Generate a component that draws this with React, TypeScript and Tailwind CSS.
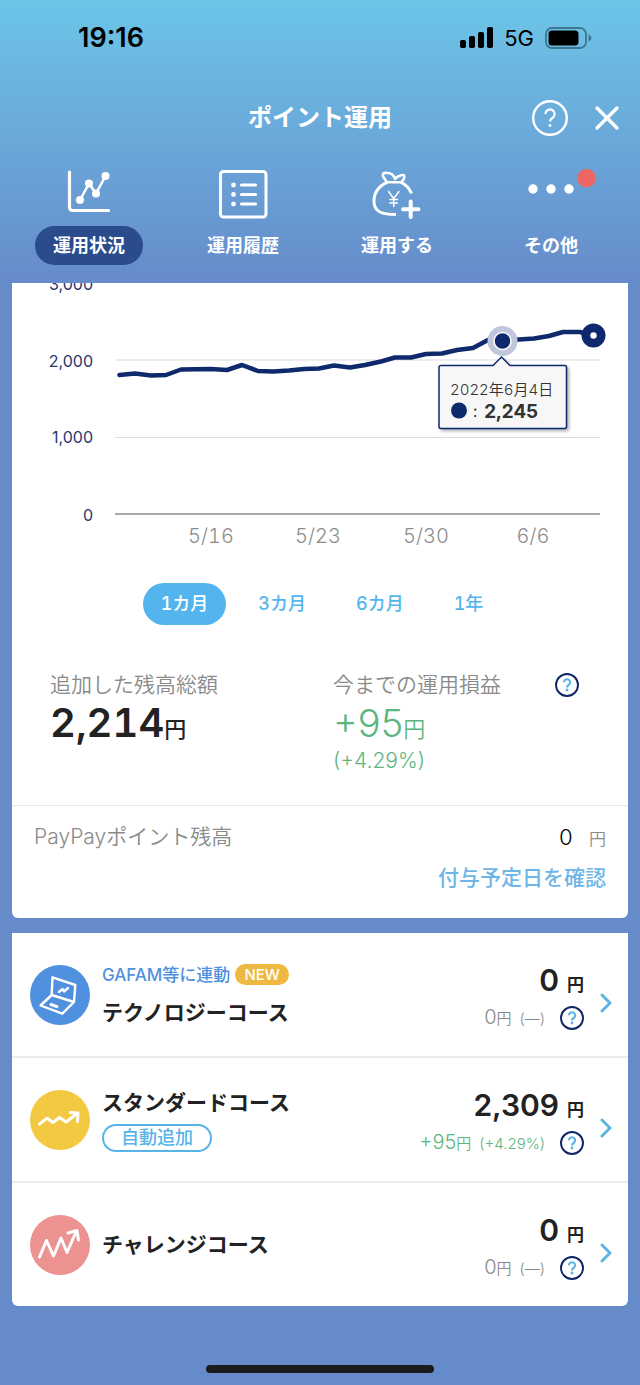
import type { ReactNode } from "react";

const HISTORY =
  "119.5,375 135,373.5 151,375.5 166,375 181,369.5 211,369 227,370 242,365 258,371 273,371.5 289,370.5 304,369 319,368.5 334,365.5 350,367.5 365,365 381,361.5 395,357.5 411,357.5 426,354 442,353.5 457,350 473,348 488,340 503,341 519,339.5 534,338.5 549,336 563,332 580,332 594,336";

function StatusBar() {
  return (
    <div className="flex h-[76px] items-center justify-between pl-[78px] pr-12 text-black">
      <span className="text-[27px] font-semibold leading-8">19:16</span>
      <div className="flex items-center gap-[11px]">
        <svg width="33" height="22" viewBox="0 0 33 22" fill="currentColor" aria-hidden="true">
          <rect x="0" y="13" width="6" height="8" rx="1.8" />
          <rect x="9" y="9" width="6" height="12" rx="1.8" />
          <rect x="18" y="5" width="6" height="16" rx="1.8" />
          <rect x="27" y="0" width="6" height="21" rx="1.8" />
        </svg>
        <span className="text-[22px] leading-8">5G</span>
        <svg width="47" height="22" viewBox="0 0 47 22" aria-hidden="true">
          <rect x="1" y="1" width="40" height="20" rx="6" fill="none" stroke="#3d7790" strokeWidth="1.8" />
          <rect x="3.5" y="3.5" width="30" height="15" rx="3.5" fill="#000" />
          <path d="M43.5 7.5c2 .8 3 2 3 3.5s-1 2.700-3 3.500z" fill="#3d7790" />
        </svg>
      </div>
    </div>
  );
}

function QuestionMark({ color, weight }: { color: string; weight: number }) {
  return (
    <>
      <path
        d="M8.900 9.300a3.100 3.100 0 1 1 4.700 2.700c-1.100.7-1.600 1.200-1.600 2.400"
        fill="none"
        stroke={color}
        strokeWidth={weight}
      />
      <circle cx="12" cy="17" r={weight * 0.68} fill={color} />
    </>
  );
}

function HelpButton() {
  return (
    <button type="button" aria-label="ヘルプ" className="block size-6 shrink-0">
      <svg viewBox="0 0 24 24" className="size-6">
        <circle cx="12" cy="12" r="11" fill="none" stroke="#0d2466" strokeWidth="1.900" />
        <QuestionMark color="#58b4ea" weight={2.1} />
      </svg>
    </button>
  );
}

function TitleBar() {
  return (
    <div className="grid h-[84px] grid-cols-[1fr_auto_1fr] items-center px-5 text-white">
      <span />
      <h1 className="text-2xl font-bold leading-8">ポイント運用</h1>
      <div className="flex items-center justify-end gap-[26px]">
        <button type="button" aria-label="ヘルプ">
          <svg viewBox="0 0 24 24" className="block size-9">
            <circle cx="12" cy="12" r="11.200" fill="none" stroke="#fff" strokeWidth="1.600" />
            <QuestionMark color="#fff" weight={1.4} />
          </svg>
        </button>
        <button type="button" aria-label="閉じる">
          <svg viewBox="0 0 26 26" className="block size-[26px]">
            <path d="M3 3l20 20M23 3L3 23" stroke="#fff" strokeWidth="3.400" strokeLinecap="round" />
          </svg>
        </button>
      </div>
    </div>
  );
}

function Tab({ label, active, children }: { label: string; active?: boolean; children: ReactNode }) {
  return (
    <button type="button" aria-pressed={!!active} className="flex flex-col items-center gap-2 text-white">
      <svg
        viewBox="0 0 52 52"
        className="size-[52px] overflow-visible"
        fill="none"
        stroke="#fff"
        strokeLinecap="round"
        strokeLinejoin="round"
        aria-hidden="true"
      >
        {children}
      </svg>
      <span
        className={
          active
            ? "rounded-full bg-[#2b4c8c] px-[18px] text-lg font-bold leading-[39px]"
            : "px-[18px] text-lg font-bold leading-[39px]"
        }
      >
        {label}
      </span>
    </button>
  );
}

function Tabs() {
  return (
    <nav className="grid grid-cols-4 px-3 pb-[18px] pt-[6px]">
      <Tab label="運用状況" active>
        <path d="M6.500 6V41Q6.500 44.500 10 44.500H45.500" strokeWidth="3.200" />
        <path d="M17 34L26 17.500L33 27.500L42.500 10" strokeWidth="2.600" />
        <g fill="#fff" stroke="none">
          <circle cx="17" cy="34" r="4" />
          <circle cx="26" cy="17.500" r="4" />
          <circle cx="33" cy="27.500" r="4" />
          <circle cx="42.500" cy="10" r="4" />
        </g>
      </Tab>
      <Tab label="運用履歴">
        <rect x="3.500" y="5.500" width="45.500" height="45.500" rx="3" strokeWidth="3" />
        <path d="M24.500 19H38.500M24.500 28.500H38.500M24.500 38H38.500" strokeWidth="3.200" />
        <g fill="#fff" stroke="none">
          <circle cx="16.500" cy="19" r="2.400" />
          <circle cx="16.500" cy="28.500" r="2.400" />
          <circle cx="16.500" cy="38" r="2.400" />
        </g>
      </Tab>
      <Tab label="運用する">
        <path
          d="M16 16.300C6 21 2.800 29 3 36C3.500 46 11 48.500 25 48.500"
          strokeWidth="3"
          strokeLinecap="butt"
        />
        <path d="M30 16.300C35 18.500 38.500 22.500 40.500 27.500" strokeWidth="3" strokeLinecap="butt" />
        <path
          d="M16 16.300H30C32 15 34 11.500 33.300 9.700C32 8.300 27 9.500 24 13C23 9 19 6.800 14.500 6.800C11 7 11.500 10 13 12C14.300 13.500 15 14.500 16 16.300"
          strokeWidth="2.600"
        />
        <path d="M17.500 25.500L22.700 32.500L28 25.500M22.700 32.500V40.500M18.800 33.500H26.500M18.800 37H26.500" strokeWidth="1.500" />
        <path d="M39.700 35.500V51M32 43.300H47.500" strokeWidth="4" />
      </Tab>
      <Tab label="その他">
        <g fill="#fff" stroke="none">
          <circle cx="8" cy="23" r="4.700" />
          <circle cx="26" cy="23" r="4.700" />
          <circle cx="44" cy="23" r="4.700" />
          <circle cx="61.500" cy="12" r="9.300" fill="#ec6764" />
        </g>
      </Tab>
    </nav>
  );
}

function Chart() {
  return (
    <svg viewBox="12 283 616 277" className="block w-full" role="img" aria-label="運用状況グラフ">
      <defs>
        <filter id="tooltip-shadow" x="-10%" y="-10%" width="125%" height="130%">
          <feDropShadow dx="2" dy="2" stdDeviation="1.500" floodColor="#000" floodOpacity="0.300" />
        </filter>
      </defs>
      <path d="M115 360H600M115 437.500H600" stroke="#dcdcdc" strokeWidth="1.200" />
      <path d="M115 514H600" stroke="#8c8c8c" strokeWidth="1.500" />
      <g className="proportional-nums" fill="#26376f" fontSize="16" textAnchor="end">
        <text x="93" y="290">3,000</text>
        <text x="93" y="367">2,000</text>
        <text x="93" y="443">1,000</text>
        <text x="93" y="521">0</text>
      </g>
      <g fill="#8c8c8c" fontSize="20" fontWeight="350" textAnchor="middle">
        <text x="211" y="543">5/16</text>
        <text x="318" y="543">5/23</text>
        <text x="426" y="543">5/30</text>
        <text x="533" y="543">6/6</text>
      </g>
      <polyline
        points={HISTORY}
        fill="none"
        stroke="#0e2a6c"
        strokeWidth="4.500"
        strokeLinecap="round"
        strokeLinejoin="round"
      />
      <circle cx="502.500" cy="341" r="15" fill="#c0c7dc" />
      <circle cx="502.500" cy="341" r="8.500" fill="#0e2a6c" stroke="#fff" strokeWidth="1.500" />
      <circle cx="593.500" cy="335.500" r="12" fill="#0e2a6c" />
      <circle cx="593.500" cy="335.500" r="3.200" fill="#fff" />
      <path
        d="M441 365.500H493L501.500 357L510 365.500H564.500Q566.500 365.500 566.500 367.500V426.500Q566.500 428.500 564.500 428.500H441Q439 428.500 439 426.500V367.500Q439 365.500 441 365.500Z"
        fill="#f7f7f7"
        stroke="#0e2a6c"
        strokeWidth="1.500"
        filter="url(#tooltip-shadow)"
      />
      <text x="450" y="395" fill="#333" fontSize="15" fontWeight="350">
        2022年6月4日
      </text>
      <circle cx="459" cy="410.500" r="8" fill="#0e2a6c" />
      <text x="473" y="417" fill="#333" fontSize="16">
        :
      </text>
      <text x="484" y="418" fill="#333" fontSize="19" fontWeight="700">
        2,245
      </text>
    </svg>
  );
}

function RangeButtons() {
  return (
    <div className="flex justify-center gap-[14px] pl-1 pt-[23px]">
      {["1カ月", "3カ月", "6カ月", "1年"].map((label, i) => (
        <button
          key={label}
          type="button"
          aria-pressed={i === 0}
          className={
            i === 0
              ? "rounded-full bg-[#54b5ee] px-[18px] text-lg font-medium leading-[42px] text-white"
              : "rounded-full px-[18px] text-lg font-medium leading-[42px] text-[#54b5ee]"
          }
        >
          {label}
        </button>
      ))}
    </div>
  );
}

function Summary() {
  return (
    <div className="grid grid-cols-2 pb-[29px] pl-[38px] pr-3 pt-[45px]">
      <div>
        <p className="text-[21px] font-[350] leading-[30px] text-[#8a8a8a]">追加した残高総額</p>
        <p className="flex h-[46px] items-baseline text-[40px] font-semibold leading-[46px] text-[#222]">
          2,214<span className="text-[22px] font-medium">円</span>
        </p>
      </div>
      <div className="pr-[37px] proportional-nums">
        <div className="flex items-center justify-between">
          <p className="text-[21px] font-[350] leading-[30px] text-[#8a8a8a]">今までの運用損益</p>
          <HelpButton />
        </div>
        <p className="flex h-[46px] items-baseline text-[38px] font-[350] leading-[46px] text-[#5cb57e]">
          +95<span className="text-[22px]">円</span>
        </p>
        <p className="text-[21px] font-[350] leading-[30px] text-[#5cb57e]">(+4.29%)</p>
      </div>
    </div>
  );
}

function PointBalance() {
  return (
    <div className="border-t border-[#e6e6e6] px-[22px] pb-[25px] pt-4">
      <div className="flex h-[30px] items-center justify-between text-[21px] font-[350] leading-[30px] text-[#8a8a8a]">
        <span>PayPayポイント残高</span>
        <span className="flex h-[30px] items-baseline gap-4">
          <span className="text-[22px] text-black">0</span>
          <span className="text-[17px]">円</span>
        </span>
      </div>
      <a href="#schedule" className="mt-[11px] block text-right text-[21px] font-medium leading-[30px] text-[#6fb6e8]">
        付与予定日を確認
      </a>
    </div>
  );
}

interface CourseProps {
  name: string;
  icon: ReactNode;
  above?: ReactNode;
  below?: ReactNode;
  amount: string;
  profit: string;
  rate: string;
  gain?: boolean;
}

function Course({ name, icon, above, below, amount, profit, rate, gain }: CourseProps) {
  return (
    <li className="flex h-[125px] items-center border-b-2 border-[#ebebeb] pl-[18px] pr-4 last:h-[123px] last:border-b-0">
      {icon}
      <div className="ml-3 flex-1">
        {above}
        <h2 className="text-[21px] font-bold leading-[30px] text-[#222]">{name}</h2>
        {below}
      </div>
      <div className="flex flex-col items-end gap-[3px] pt-[5px] proportional-nums">
        <p className="flex items-baseline gap-2 font-semibold leading-[34px] text-[#222]">
          <span className="text-[30px]">{amount}</span>
          <span className="text-[17px]">円</span>
        </p>
        <div className="flex items-center gap-[15px]">
          <p
            className={
              gain
                ? "text-[15px] font-[350] leading-6 text-[#5cb57e]"
                : "text-[15px] font-[350] leading-6 text-[#8a8a8a]"
            }
          >
            <span className="text-xl leading-6">{profit}</span>円<span className="ml-2">{rate}</span>
          </p>
          <HelpButton />
        </div>
      </div>
      <a href="#course" aria-label={name} className="ml-4 mt-4 block">
        <svg viewBox="0 0 12 20" className="h-5 w-3">
          <path d="M2 2l8 8l-8 8" fill="none" stroke="#5cb3e4" strokeWidth="3" strokeLinecap="round" />
        </svg>
      </a>
    </li>
  );
}

function LaptopIcon() {
  return (
    <svg viewBox="0 0 60 60" className="size-[60px] shrink-0" fill="none" stroke="#fff" strokeLinejoin="round" aria-hidden="true">
      <circle cx="30" cy="30" r="30" fill="#4f90df" stroke="none" />
      <path d="M22.500 12.300L45.300 20L44 37L21.700 30Z" strokeWidth="2.400" />
      <path d="M21.700 30L10.500 40.500L32.300 48.700L44 37" strokeWidth="2.400" />
      <path d="M29 27l3.500-3l1.500 2.500l4-3.500" strokeWidth="2.400" strokeLinecap="round" />
      <path d="M21 39.500l6 2.200" strokeWidth="3" strokeLinecap="round" />
    </svg>
  );
}

function StandardIcon() {
  return (
    <svg viewBox="0 0 60 60" className="size-[60px] shrink-0" fill="none" stroke="#fff" strokeWidth="3" strokeLinecap="round" strokeLinejoin="round" aria-hidden="true">
      <circle cx="30" cy="30" r="30" fill="#f4c942" stroke="none" />
      <path d="M9.500 34L17 28.300L23 32.500L29.500 27.500L36 32L46.500 24M40.500 22.500L48 23L47.500 31.500" />
    </svg>
  );
}

function ChallengeIcon() {
  return (
    <svg viewBox="0 0 60 60" className="size-[60px] shrink-0" fill="none" stroke="#fff" strokeWidth="3" strokeLinecap="round" strokeLinejoin="round" aria-hidden="true">
      <circle cx="30" cy="30" r="30" fill="#ec9290" stroke="none" />
      <path d="M9.500 42L16.500 25.500L23.500 41L31 23L37 37.500L46 17M38 18L47 15.500L48.500 25" />
    </svg>
  );
}

export default function App() {
  return (
    <div
      className="min-h-screen bg-[#668bca] font-['Inter','Noto_Sans_CJK_JP',sans-serif]"
      lang="ja"
    >
      <header className="bg-linear-to-b from-[#6cc5e8] to-[#668bca]">
        <StatusBar />
        <TitleBar />
        <Tabs />
      </header>
      <main className="flex flex-col gap-[15px] px-3 tabular-nums">
        <section className="rounded-b-md bg-white">
          <Chart />
          <RangeButtons />
          <Summary />
          <PointBalance />
        </section>
        <ul className="rounded-b-md bg-white">
          <Course
            name="テクノロジーコース"
            icon={<LaptopIcon />}
            above={
              <div className="mb-2 mt-[-2px] flex items-center gap-[5px]">
                <span className="text-[17px] font-medium leading-[30px] text-[#4f90df]">GAFAM等に連動</span>
                <span className="rounded-full bg-[#eeb843] px-[9px] text-[15px] font-medium leading-[21px] text-white">
                  NEW
                </span>
              </div>
            }
            amount="0"
            profit="0"
            rate="(—)"
          />
          <Course
            name="スタンダードコース"
            icon={<StandardIcon />}
            below={
              <span className="mt-[6px] inline-block rounded-full border-2 border-[#58b4e8] px-[17px] text-lg font-medium leading-6 text-[#58b4e8]">
                自動追加
              </span>
            }
            amount="2,309"
            profit="+95"
            rate="(+4.29%)"
            gain
          />
          <Course name="チャレンジコース" icon={<ChallengeIcon />} amount="0" profit="0" rate="(—)" />
        </ul>
      </main>
      <footer className="flex justify-center pb-3 pt-[59px]">
        <div className="h-2 w-[228px] rounded-full bg-[#1c1c1e]" />
      </footer>
    </div>
  );
}
